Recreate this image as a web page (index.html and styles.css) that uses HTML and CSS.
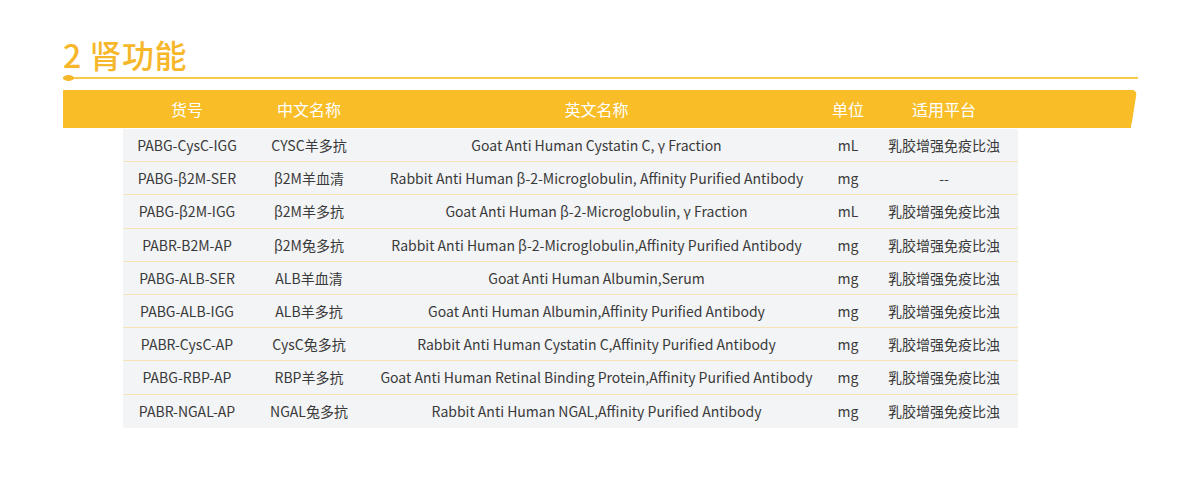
FILE: index.html
```html
<!DOCTYPE html>
<html lang="zh">
<head>
<meta charset="utf-8">
<link rel="stylesheet" href="styles.css">
</head>
<body>
<div class="section">
  <h2 class="title">2 肾功能</h2>
  <div class="rule"><span class="dot"></span></div>
  <div class="thead">
    <div class="cells">
      <div class="c c1">货号</div>
      <div class="c c2">中文名称</div>
      <div class="c c3">英文名称</div>
      <div class="c c4">单位</div>
      <div class="c c5">适用平台</div>
    </div>
  </div>
  <div class="tbody">
    <div class="row"><div class="c c1">PABG-CysC-IGG</div><div class="c c2">CYSC羊多抗</div><div class="c c3">Goat Anti Human Cystatin C, γ Fraction</div><div class="c c4">mL</div><div class="c c5">乳胶增强免疫比浊</div></div>
    <div class="row"><div class="c c1">PABG-β2M-SER</div><div class="c c2">β2M羊血清</div><div class="c c3">Rabbit Anti Human β-2-Microglobulin, Affinity Purified Antibody</div><div class="c c4">mg</div><div class="c c5">--</div></div>
    <div class="row"><div class="c c1">PABG-β2M-IGG</div><div class="c c2">β2M羊多抗</div><div class="c c3">Goat Anti Human β-2-Microglobulin, γ Fraction</div><div class="c c4">mL</div><div class="c c5">乳胶增强免疫比浊</div></div>
    <div class="row"><div class="c c1">PABR-B2M-AP</div><div class="c c2">β2M兔多抗</div><div class="c c3">Rabbit Anti Human β-2-Microglobulin,Affinity Purified Antibody</div><div class="c c4">mg</div><div class="c c5">乳胶增强免疫比浊</div></div>
    <div class="row"><div class="c c1">PABG-ALB-SER</div><div class="c c2">ALB羊血清</div><div class="c c3">Goat Anti Human Albumin,Serum</div><div class="c c4">mg</div><div class="c c5">乳胶增强免疫比浊</div></div>
    <div class="row"><div class="c c1">PABG-ALB-IGG</div><div class="c c2">ALB羊多抗</div><div class="c c3">Goat Anti Human Albumin,Affinity Purified Antibody</div><div class="c c4">mg</div><div class="c c5">乳胶增强免疫比浊</div></div>
    <div class="row"><div class="c c1">PABR-CysC-AP</div><div class="c c2">CysC兔多抗</div><div class="c c3">Rabbit Anti Human Cystatin C,Affinity Purified Antibody</div><div class="c c4">mg</div><div class="c c5">乳胶增强免疫比浊</div></div>
    <div class="row"><div class="c c1">PABG-RBP-AP</div><div class="c c2">RBP羊多抗</div><div class="c c3">Goat Anti Human Retinal Binding Protein,Affinity Purified Antibody</div><div class="c c4">mg</div><div class="c c5">乳胶增强免疫比浊</div></div>
    <div class="row"><div class="c c1">PABR-NGAL-AP</div><div class="c c2">NGAL兔多抗</div><div class="c c3">Rabbit Anti Human NGAL,Affinity Purified Antibody</div><div class="c c4">mg</div><div class="c c5">乳胶增强免疫比浊</div></div>
  </div>
</div>
</body>
</html>
```
FILE: styles.css
```css
html, body {
  margin: 0;
  padding: 0;
  background: #ffffff;
}
body {
  font-family: "Noto Sans CJK SC", "Noto Sans", sans-serif;
  color: #3a3a3a;
}
.section {
  width: 1075px;
  margin-left: 63px;
  padding-top: 34px;
}
.title {
  margin: 0;
  font-size: 32px;
  line-height: 40px;
  font-weight: 500;
  color: #f6b72a;
  letter-spacing: 0.5px;
}
.rule {
  position: relative;
  margin-top: 3px;
  height: 2px;
  background: #f8c94f;
}
.dot {
  position: absolute;
  left: 0;
  top: -2px;
  width: 11px;
  height: 6px;
  border-radius: 50%;
  background: #f6b72a;
}
.thead {
  position: relative;
  margin-top: 11px;
  width: 1068px;
  height: 38px;
  background: #f8bd27;
}
.thead::after {
  content: "";
  position: absolute;
  right: 0;
  top: 0;
  width: 30px;
  height: 38px;
  background: #f8bd27;
  border-radius: 0 5px 5px 0;
  transform: skewX(-9deg);
  transform-origin: bottom right;
}
.cells {
  position: relative;
  z-index: 1;
  display: flex;
  margin-left: 60px;
  height: 38px;
  align-items: center;
  color: #ffffff;
  font-size: 16px;
}
.c {
  text-align: center;
  white-space: nowrap;
}
.c1 { width: 128px; }
.c2 { width: 116px; }
.c3 { width: 459px; }
.c4 { width: 44px; }
.c5 { width: 148px; }
.tbody {
  margin-left: 60px;
  margin-top: 1px;
  width: 895px;
  background: #f3f4f6;
}
.row {
  display: flex;
  align-items: center;
  height: 32.2px;
  font-size: 14px;
  border-bottom: 1px solid #f6e2b6;
}
.row:last-child {
  border-bottom: 1px solid #f3f4f6;
}
```
